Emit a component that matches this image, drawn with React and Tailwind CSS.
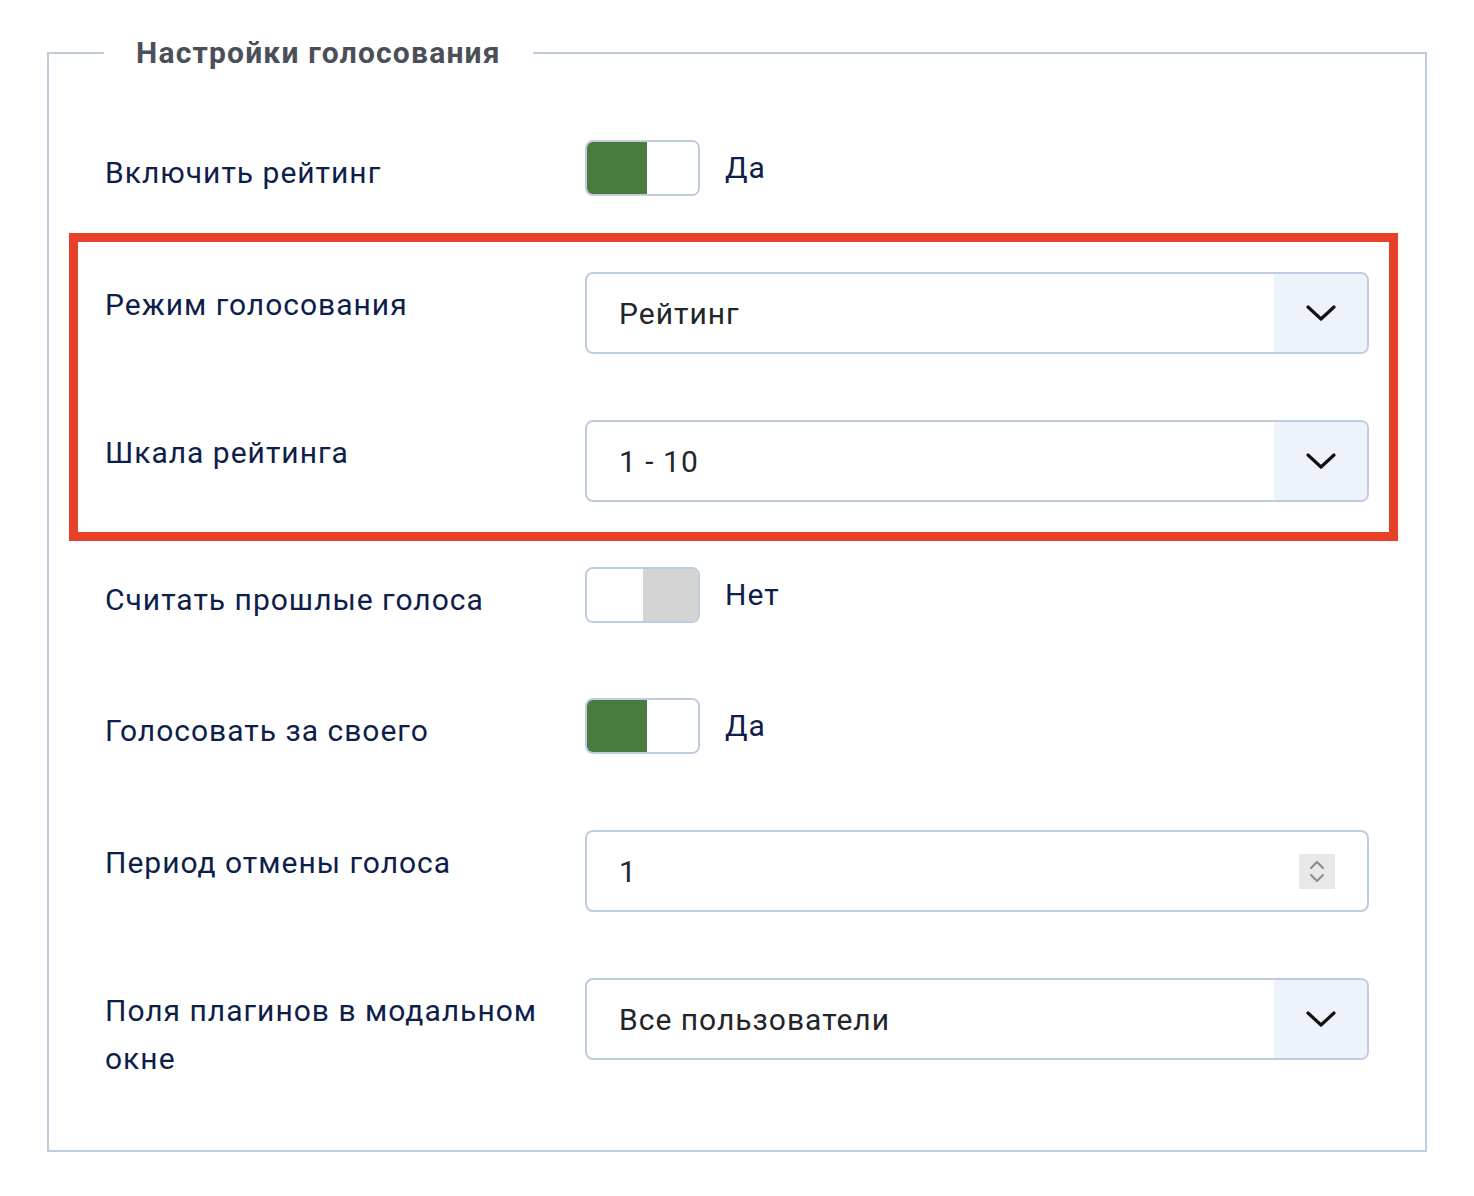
import React from "react";

const font = { fontFamily: "Roboto, 'Noto Sans', sans-serif" };

function Chevron() {
  return (
    <svg width="30" height="18" viewBox="0 0 30 18" fill="none">
      <path d="M2 3 L15 15 L28 3" stroke="#111" strokeWidth="3.2" strokeLinecap="round" strokeLinejoin="round" />
    </svg>
  );
}

function Toggle({ on }) {
  return (
    <div className="flex h-[56px] w-[115px] overflow-hidden rounded-[8px] border-2 border-[#bfcbe0] bg-white">
      {on ? (
        <>
          <div className="h-full w-[60px] bg-[#497a3e]" />
          <div className="h-full flex-1 bg-white" />
        </>
      ) : (
        <>
          <div className="h-full w-[56px] bg-white" />
          <div className="h-full flex-1 bg-[#d4d4d4]" />
        </>
      )}
    </div>
  );
}

function Label({ children }) {
  return (
    <div className="w-[480px] shrink-0 pt-[9px] pr-[30px] text-[30px] leading-[48px] tracking-[1px] text-[#0e1e4a]">
      {children}
    </div>
  );
}

function ToggleRow({ label, on, text, className }) {
  return (
    <div className={"flex items-start " + className}>
      <Label>{label}</Label>
      <div className="flex items-center">
        <Toggle on={on} />
        <span className="ml-[25px] text-[30px] leading-[40px] tracking-[1px] text-[#0e1e4a]">{text}</span>
      </div>
    </div>
  );
}

function Select({ value }) {
  return (
    <div className="flex h-[82px] flex-1 overflow-hidden rounded-[8px] border-2 border-[#bfcbe0] bg-white">
      <div className="flex flex-1 items-center pl-[32px] text-[30px] tracking-[1px] text-[#22262a]">{value}</div>
      <div className="flex w-[93px] items-center justify-center bg-[#eef2fb]">
        <Chevron />
      </div>
    </div>
  );
}

function SelectRow({ label, value, className }) {
  return (
    <div className={"flex items-start " + className}>
      <Label>{label}</Label>
      <Select value={value} />
    </div>
  );
}

export default function App() {
  return (
    <div className="min-h-[1196px] bg-white pl-[47px] pt-[35px]" style={font}>
      <fieldset className="w-[1380px] border-2 border-[#bfcbe0] px-0 pb-[67px]">
        <legend className="ml-[55px] px-[32px] text-[30px] font-bold leading-[36px] tracking-[1.2px] text-[#4b5058]">
          Настройки голосования
        </legend>

        <div className="pl-[56px] pr-[56px]">
          <ToggleRow label="Включить рейтинг" on text="Да" className="mt-[69px]" />
        </div>

        <div className="ml-[20px] mr-[27px] mt-[36px] border-[9px] border-[#e8412a] pb-[30px] pl-[27px] pr-[20px] pt-[30px]">
          <SelectRow label="Режим голосования" value="Рейтинг" />
          <SelectRow label="Шкала рейтинга" value="1 - 10" className="mt-[66px]" />
        </div>

        <div className="pl-[56px] pr-[56px]">
          <ToggleRow label="Считать прошлые голоса" on={false} text="Нет" className="mt-[26px]" />
          <ToggleRow label="Голосовать за своего" on text="Да" className="mt-[74px]" />

          <div className="mt-[75px] flex items-start">
            <Label>Период отмены голоса</Label>
            <div className="flex h-[82px] flex-1 items-center rounded-[8px] border-2 border-[#bfcbe0] bg-white pl-[32px] pr-[32px]">
              <span className="flex-1 text-[30px] text-[#22262a]">1</span>
              <div className="flex h-[35px] w-[36px] flex-col items-center justify-center gap-[3px] bg-[#e8e8e8]">
                <svg width="16" height="10" viewBox="0 0 16 10" fill="none">
                  <path d="M2 8 L8 2 L14 8" stroke="#8a8a8f" strokeWidth="2" strokeLinecap="round" strokeLinejoin="round" />
                </svg>
                <svg width="16" height="10" viewBox="0 0 16 10" fill="none">
                  <path d="M2 2 L8 8 L14 2" stroke="#8a8a8f" strokeWidth="2" strokeLinecap="round" strokeLinejoin="round" />
                </svg>
              </div>
            </div>
          </div>

          <SelectRow label="Поля плагинов в модальном окне" value="Все пользователи" className="mt-[66px]" />
        </div>
      </fieldset>
    </div>
  );
}
